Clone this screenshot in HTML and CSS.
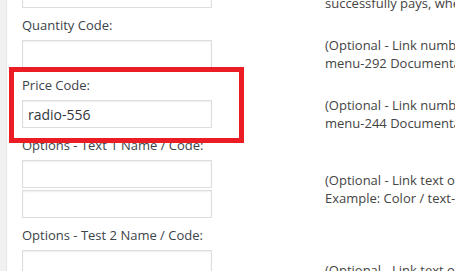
FILE: index.html
```html
<!DOCTYPE html>
<html lang="en">
<head>
    <meta charset="UTF-8">
    <meta name="viewport" content="width=device-width, initial-scale=1.0">
    <title>Form Settings</title>
    <link rel="stylesheet" href="styles.css">
</head>
<body>
    <div class="panel">
        <div class="field">
            <div class="field-row">
                <div class="inputs">
                    <input type="text">
                </div>
                <p class="desc">(Optional - URL the customer is sent to after he<br>successfully pays, where the order is completed.)</p>
            </div>
        </div>

        <div class="field">
            <label>Quantity Code:</label>
            <div class="field-row">
                <div class="inputs">
                    <input type="text">
                </div>
                <p class="desc">(Optional - Link number field of the quantity. Example:<br>menu-292 Documentation)</p>
            </div>
        </div>

        <div class="field highlight">
            <label>Price Code:</label>
            <div class="field-row">
                <div class="inputs">
                    <input type="text" value="radio-556">
                </div>
                <p class="desc">(Optional - Link number field of the price. Example:<br>menu-244 Documentation)</p>
            </div>
        </div>

        <div class="field">
            <label>Options - Text 1 Name / Code:</label>
            <div class="field-row">
                <div class="inputs">
                    <input type="text">
                    <input type="text">
                </div>
                <p class="desc">(Optional - Link text of the option name and code.<br>Example: Color / text-512)</p>
            </div>
        </div>

        <div class="field">
            <label>Options - Test 2 Name / Code:</label>
            <div class="field-row">
                <div class="inputs">
                    <input type="text">
                    <input type="text">
                </div>
                <p class="desc">(Optional - Link text of the option name and code.<br>Example: Size / text-618)</p>
            </div>
        </div>
    </div>
</body>
</html>
```

FILE: styles.css
```css
body {
    font-family: 'Open Sans', 'Liberation Sans', sans-serif;
    font-size: 13px;
    color: #444;
    margin: 0;
    background-color: #f1f1f1;
    height: 271px;
    overflow: hidden;
}

.panel {
    margin: -20px 0 0 6px;
    padding: 0 0 40px 15px;
    background-color: #fff;
    border-left: 1px solid #e5e5e5;
}

.field + .field {
    margin-top: 8px;
}

.field label {
    display: block;
    line-height: 18px;
    margin-bottom: 6px;
    color: #3c434a;
}

.field-row {
    display: flex;
    align-items: center;
}

.inputs {
    display: flex;
    flex-direction: column;
    gap: 2px;
    flex: 0 0 190px;
}

.inputs input {
    width: 190px;
    height: 28px;
    box-sizing: border-box;
    margin: 0;
    padding: 3px 5px;
    border: 1px solid #ddd;
    box-shadow: inset 0 1px 2px rgba(0,0,0,0.07);
    background-color: #fff;
    font-family: 'Open Sans', 'Liberation Sans', sans-serif;
    font-size: 14px;
    color: #32373c;
    outline: none;
}

/* two lines of text hang over the single input, they don't grow the row */
.desc {
    margin: -4px 0 -4px 113px;
    line-height: 18px;
    white-space: nowrap;
}

.highlight {
    position: relative;
}

.highlight::before {
    content: "";
    position: absolute;
    top: -9px;
    left: -13px;
    width: 235px;
    height: 76px;
    box-sizing: border-box;
    border: 5px solid #ec1c24;
    pointer-events: none;
    z-index: 2;
}
```
